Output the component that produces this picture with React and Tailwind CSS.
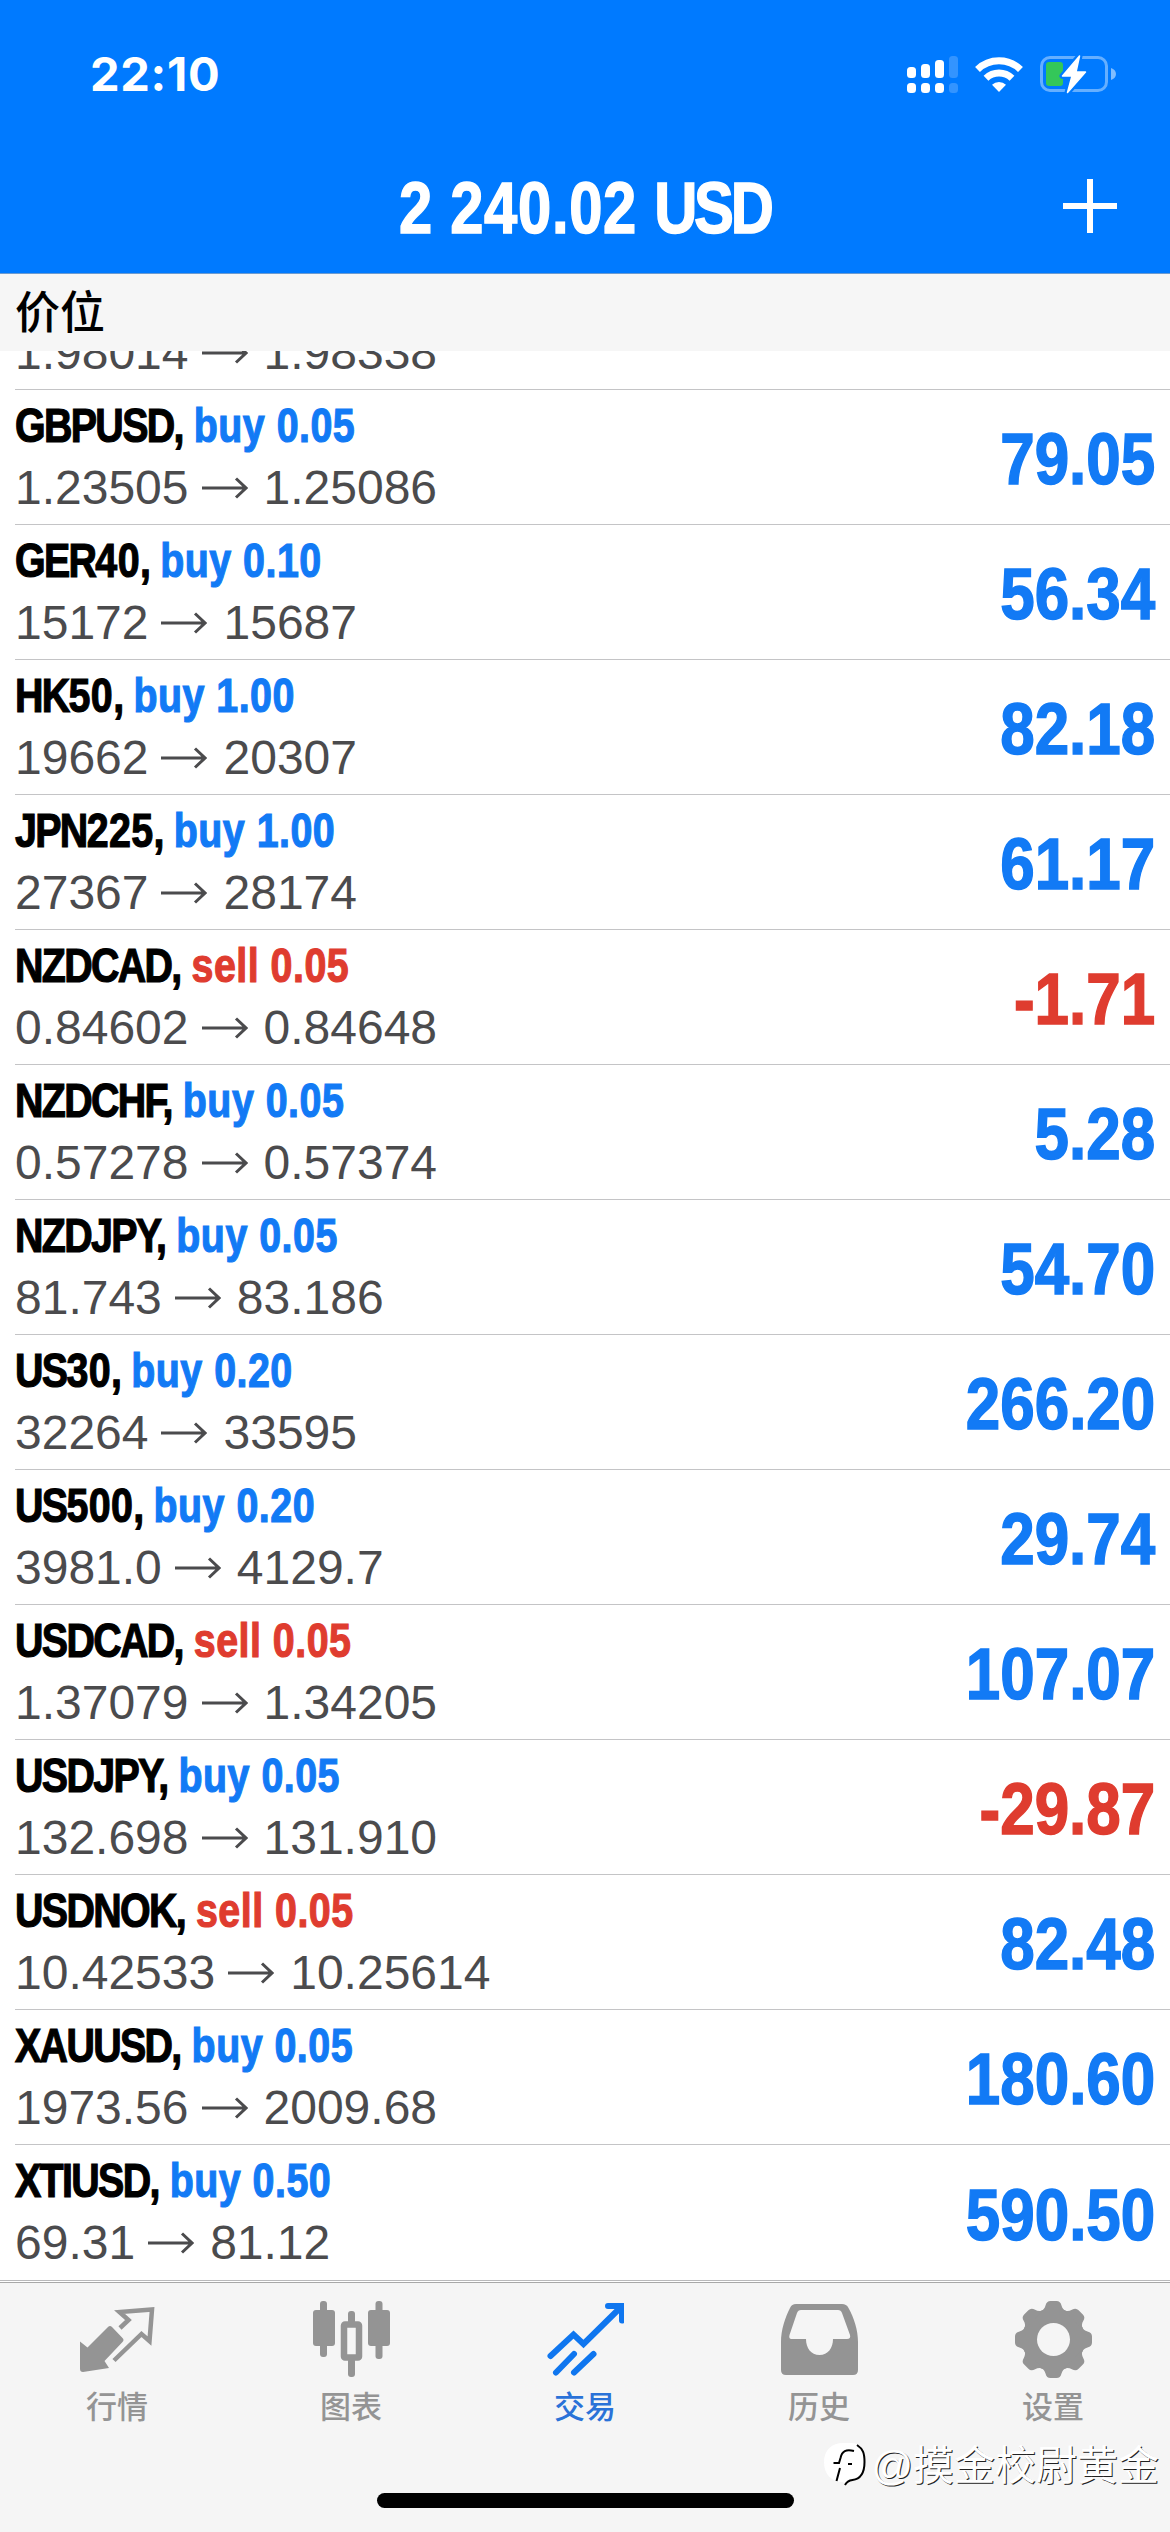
import React from 'react';

const positions = [
  { symbol: 'GBPUSD', side: 'buy', volume: '0.05', open: '1.23505', current: '1.25086', profit: '79.05' },
  { symbol: 'GER40', side: 'buy', volume: '0.10', open: '15172', current: '15687', profit: '56.34' },
  { symbol: 'HK50', side: 'buy', volume: '1.00', open: '19662', current: '20307', profit: '82.18' },
  { symbol: 'JPN225', side: 'buy', volume: '1.00', open: '27367', current: '28174', profit: '61.17' },
  { symbol: 'NZDCAD', side: 'sell', volume: '0.05', open: '0.84602', current: '0.84648', profit: '-1.71' },
  { symbol: 'NZDCHF', side: 'buy', volume: '0.05', open: '0.57278', current: '0.57374', profit: '5.28' },
  { symbol: 'NZDJPY', side: 'buy', volume: '0.05', open: '81.743', current: '83.186', profit: '54.70' },
  { symbol: 'US30', side: 'buy', volume: '0.20', open: '32264', current: '33595', profit: '266.20' },
  { symbol: 'US500', side: 'buy', volume: '0.20', open: '3981.0', current: '4129.7', profit: '29.74' },
  { symbol: 'USDCAD', side: 'sell', volume: '0.05', open: '1.37079', current: '1.34205', profit: '107.07' },
  { symbol: 'USDJPY', side: 'buy', volume: '0.05', open: '132.698', current: '131.910', profit: '-29.87' },
  { symbol: 'USDNOK', side: 'sell', volume: '0.05', open: '10.42533', current: '10.25614', profit: '82.48' },
  { symbol: 'XAUUSD', side: 'buy', volume: '0.05', open: '1973.56', current: '2009.68', profit: '180.60' },
  { symbol: 'XTIUSD', side: 'buy', volume: '0.50', open: '69.31', current: '81.12', profit: '590.50' },
];

function SignalIcon() {
  return (
    <svg width="51" height="38" viewBox="0 0 51 38" fill="#fff">
      <rect x="0" y="12" width="9" height="11" rx="3.500" />
      <rect x="14" y="9" width="9" height="14" rx="3.500" />
      <rect x="28" y="5" width="9" height="18" rx="3.500" />
      <rect x="42" y="1" width="9" height="22" rx="3.500" opacity="0.2" />
      <rect x="0" y="28" width="9" height="10" rx="3.500" />
      <rect x="14" y="28" width="9" height="10" rx="3.500" />
      <rect x="28" y="28" width="9" height="10" rx="3.500" />
      <rect x="42" y="28" width="9" height="10" rx="3.500" opacity="0.2" />
    </svg>
  );
}

function WifiIcon() {
  return (
    <svg width="48" height="36" viewBox="0 0 48 36" fill="none" stroke="#fff" strokeWidth="7">
      <path d="M2.5 13.5a31 31 0 0 1 43 0" />
      <path d="M11 22.2a19 19 0 0 1 26 0" />
      <path d="M24 36l-7-7.3a10.500 10.500 0 0 1 14 0z" fill="#fff" stroke="none" />
    </svg>
  );
}

function BatteryIcon() {
  return (
    <svg width="77" height="40" viewBox="0 0 77 40">
      <rect x="1.500" y="3.500" width="65" height="33" rx="8.500" fill="none" stroke="#fff" strokeOpacity="0.4" strokeWidth="3" />
      <path d="M71 14v12c3-1 5-3 5-6s-2-5-5-6z" fill="#fff" opacity="0.5" />
      <rect x="6" y="8" width="17" height="24" rx="3" fill="#34c759" />
      <path d="M39.500 2L22.500 22h9.500l-4.500 16.500 18-20.500H36z" fill="none" stroke="#007aff" strokeWidth="6" strokeLinejoin="round" />
      <path d="M39.500 2L22.500 22h9.500l-4.500 16.500 18-20.500H36z" fill="#fff" stroke="#fff" strokeWidth="1.500" strokeLinejoin="round" />
    </svg>
  );
}

function Arrow() {
  return (
    <svg className="mr-[16px] ml-[13px] shrink-0" width="46" height="22" viewBox="0 0 46 22" fill="none" stroke="#4b4b4d" strokeWidth="3">
      <path d="M0 11h44M34 1.500l10 9.500-10 9.500" />
    </svg>
  );
}

function QuotesIcon() {
  return (
    <svg width="78" height="78" viewBox="0 0 78 78">
      <path d="M2 40.500l7.500 6L30 26q2-2 4 0l10.500 11q2 2 0 4L26.500 60l4.500 7-26 4q-3 0-3-3z" fill="#949494" />
      <path d="M42 27l8.500-8-9-8L74 8.500 71.500 40 63.500 33 36 59.500" fill="none" stroke="#949494" strokeWidth="4.500" />
    </svg>
  );
}

function ChartIcon() {
  return (
    <svg width="78" height="78" viewBox="0 0 78 78" fill="#949494">
      <rect x="8" y="0" width="7" height="56" rx="3" />
      <rect x="1" y="9" width="22" height="36" rx="3" />
      <rect x="63.500" y="0" width="7" height="58" rx="3" />
      <rect x="56" y="9" width="22" height="36" rx="3" />
      <rect x="36" y="10" width="7" height="13" rx="3" />
      <rect x="36" y="57" width="7" height="19" rx="3" />
      <rect x="32" y="23.500" width="15" height="33" rx="1" fill="none" stroke="#949494" strokeWidth="6.500" />
    </svg>
  );
}

function TradeIcon() {
  return (
    <svg width="78" height="78" viewBox="0 0 78 78" fill="none" stroke="#0f76ef" strokeWidth="6" strokeLinecap="round">
      <path d="M4.500 55l23-21.500L37.500 43 75 6" />
      <path d="M62 5h14v14.500" />
      <path d="M10 71.500L28 53M28 71.500L47.500 53" />
    </svg>
  );
}

function HistoryIcon() {
  return (
    <svg width="78" height="78" viewBox="0 0 78 78" fill="#949494" fillRule="evenodd">
      <path d="M16 3h46c3 0 5 1 6.500 4C74 17 78 29 78 41v28q0 5-5 5H6q-5 0-5-5V41C1 29 5 17 10 7c1.500-3 3-4 6-4zM21 9q-3 0-4 3L9.500 34q-1 4 2 4H26c0 9 5 16 13.500 16S53 47 53 38h14q4 0 3-4L62 12q-1-3-4-3z" />
    </svg>
  );
}

function SettingsIcon() {
  return (
    <svg width="78" height="78" viewBox="0 0 78 78">
      <g fill="#949494">
        <circle cx="39.500" cy="38.500" r="31.500" />
        {[0, 45, 90, 135, 180, 225, 270, 315].map((angle) => (
          <path key={angle} d="M26.500 10.500q4-2 5-6 1-4.500 5-4.500h6q4 0 5 4.500 1 4 5 6z" transform={`rotate(${angle} 39.5 38.5)`} />
        ))}
      </g>
      <circle cx="39.500" cy="38.500" r="16.500" fill="#f5f5f5" />
    </svg>
  );
}

function WatermarkLogo() {
  return (
    <svg width="44" height="50" viewBox="0 0 44 50" fill="none" stroke="#000" strokeWidth="2">
      <path d="M20 2h8c9 0 14 6 14 16v5c0 9-5 15-13 16l-6 6-3-4C8 41 1 33 1 21S9 2 20 2z" fill="#fff" stroke="none" />
      <path d="M34 4c6 4 7.500 8 7.500 17 0 11-4 17-12 18-4 .5-6 2-7.500 5" />
      <path d="M31 10c-8-2-12 0-13.500 7l-1.500 5H10.500M17 27l-3.500 13M25 23h4" />
    </svg>
  );
}

const tabs = [
  { label: '行情', icon: QuotesIcon },
  { label: '图表', icon: ChartIcon },
  { label: '交易', icon: TradeIcon, active: true },
  { label: '历史', icon: HistoryIcon },
  { label: '设置', icon: SettingsIcon },
];

function PriceLine({ open, current }) {
  return (
    <div className="flex items-center text-[48px] leading-[56px] text-[#4b4b4d]">
      <span>{open}</span>
      <Arrow />
      <span>{current}</span>
    </div>
  );
}

function PositionRow({ symbol, side, volume, open, current, profit }) {
  const letters = symbol.replace(/\d+$/, '');
  const digits = symbol.slice(letters.length);

  return (
    <div className="ml-[15px] flex h-[135px] items-center justify-between border-b border-[#c4c4c6] pr-[15px] last:border-b-0">
      <div className="pb-[3px]">
        <div className="mb-1 origin-left scale-x-[0.82] whitespace-nowrap text-[48px] leading-[60px] font-bold [-webkit-text-stroke:1.2px_currentColor]">
          <span className="tracking-[-2px] text-black">
            {letters}
            {digits && <span className="tracking-[0.5px]">{digits}</span>},
          </span>{' '}
          <span className={side === 'buy' ? 'tracking-[0.6px] text-[#127af5]' : 'tracking-[0.6px] text-[#df3c2f]'}>{side} {volume}</span>
        </div>
        <PriceLine open={open} current={current} />
      </div>
      <div className={`mt-[4px] origin-right scale-x-[0.86] text-[72px] leading-[80px] font-bold [-webkit-text-stroke:1.5px_currentColor] ${profit.startsWith('-') ? 'text-[#df3c2f]' : 'text-[#127af5]'}`}>
        {profit}
      </div>
    </div>
  );
}

export default function App() {
  return (
    <div className="relative flex h-[2532px] w-[1170px] flex-col overflow-hidden bg-white font-['Liberation_Sans','Noto_Sans_CJK_SC',sans-serif]">
      <header className="h-[274px] border-b border-[#6c9bd0] bg-[#007aff] text-white">
        <div className="flex h-[148px] items-center justify-between pr-[53px] pl-[90px]">
          <span className="font-['Inter',sans-serif] text-[47px] font-bold tracking-[0.7px]">22:10</span>
          <div className="flex items-center gap-[17px]">
            <SignalIcon />
            <WifiIcon />
            <BatteryIcon />
          </div>
        </div>
        <div className="grid h-[120px] grid-cols-[1fr_auto_1fr] items-center">
          <span />
          <h1 className="scale-x-[0.83] text-[72px] font-bold [-webkit-text-stroke:1.5px_currentColor]">
            <span className="tracking-[0.8px]">2 240.02 </span>
            <span className="tracking-[-4px]">USD</span>
          </h1>
          <svg className="mr-[53px] mb-1 justify-self-end" width="54" height="54" viewBox="0 0 54 54" stroke="#fff" strokeWidth="6">
            <path d="M27 0v54M0 27h54" />
          </svg>
        </div>
      </header>

      <div className="flex h-[77px] items-center bg-[#f6f6f6] pt-[2px] pl-[15px] text-[45px] leading-[60px] font-medium text-black">价位</div>

      <main className="h-[1930px] overflow-hidden border-b border-[#b9b9bb]">
        <div className="ml-[15px] flex h-[39px] items-end border-b border-[#c4c4c6] pb-[8px]">
          <PriceLine open="1.98014" current="1.98338" />
        </div>
        {positions.map((position) => (
          <PositionRow key={position.symbol} {...position} />
        ))}
      </main>

      <nav className="mt-px grid h-[250px] grid-cols-5 border-t border-[#a8a8a8] bg-[#f5f5f5] pt-[18px]">
        {tabs.map(({ label, icon: Icon, active }) => (
          <div key={label} className={`flex flex-col items-center text-[31px] leading-[45px] font-medium ${active ? 'text-[#2a72d8]' : 'text-[#949494]'}`}>
            <Icon />
            <span className="mt-[6px]">{label}</span>
          </div>
        ))}
      </nav>

      <div className="absolute bottom-[24px] left-[377px] h-[15px] w-[417px] rounded-full bg-black" />
      <div className="absolute right-[11px] bottom-[36px] flex items-center gap-[4px] text-[41px] leading-[60px] text-white [text-shadow:1px_1px_0_#222]">
        <WatermarkLogo />
        <span>@摸金校尉黄金</span>
      </div>
    </div>
  );
}
